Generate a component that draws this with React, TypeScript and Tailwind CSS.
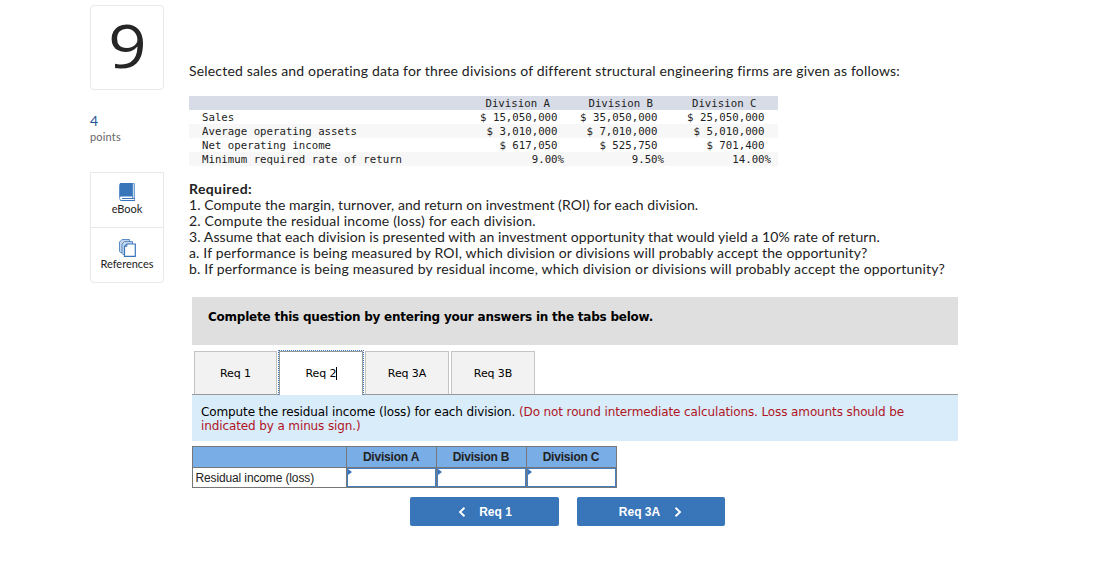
const rows = [
  { label: "Sales", values: ["$ 15,050,000", "$ 35,050,000", "$ 25,050,000"], pad: "pr-[6.5px]" },
  { label: "Average operating assets", values: ["$ 3,010,000", "$ 7,010,000", "$ 5,010,000"], pad: "pr-[6.5px]" },
  { label: "Net operating income", values: ["$ 617,050", "$ 525,750", "$ 701,400"], pad: "pr-[6.5px]" },
  { label: "Minimum required rate of return", values: ["9.00%", "9.50%", "14.00%"], pad: "" },
];

const divisions = ["Division A", "Division B", "Division C"];

function BookIcon() {
  return (
    <svg width="17" height="19" viewBox="0 0 17 19" className="block">
      <path d="M2.5 0.5H15.5V17.5H2.5C1.3 17.5 0.5 16.6 0.5 15.5V2.5C0.5 1.3 1.3 0.5 2.5 0.5Z" fill="#fff" stroke="#7ba3d3" />
      <path d="M2 0H13.5V13.5H2.5C1.6 13.5 1 13.9 0.6 14.4V1.4C0.6 0.6 1.2 0 2 0Z" fill="#3875b9" />
      <path d="M3 15.5H15.5M13.8 1V15" stroke="#3875b9" fill="none" />
      <path d="M1 16.6C1.5 17.3 2 17.5 2.6 17.5H16" stroke="#3875b9" fill="none" />
    </svg>
  );
}

function PagesIcon() {
  return (
    <svg width="17" height="18" viewBox="0 0 17 18" className="block">
      <path d="M3 0.5H10.5V13.5H1.5L0.5 12.5V3Z" fill="#c3d5ea" stroke="#5b8cc8" />
      <path d="M5.5 2.5H13.5V15.5H4L3 14.5V5Z" fill="#c3d5ea" stroke="#5b8cc8" />
      <path d="M8 5H16.3V17.4H5.5V7.5Z" fill="#fff" stroke="#3875b9" strokeWidth="1.2" />
      <path d="M5.5 7.5H8V5Z" fill="#7ba3d3" stroke="#3875b9" strokeWidth="0.6" />
    </svg>
  );
}

function Chevron({ d }: { d: string }) {
  return (
    <svg width="8" height="10" viewBox="0 0 8 10" className="block">
      <path d={d} fill="none" stroke="#fff" strokeWidth="1.9" />
    </svg>
  );
}

function Sidebar() {
  return (
    <aside className="flex w-[74px] shrink-0 flex-col pt-[5px] font-['Lato',sans-serif]">
      <div className="flex h-[85px] items-center justify-center rounded-[4px] border border-[#e8e8e8] pb-[6px] font-['Open_Sans',sans-serif] text-[61px] leading-none text-[#262626]">
        <span className="scale-x-110">9</span>
      </div>
      <div className="mt-[23px] h-[16px] text-[14px] leading-[16px] text-[#1f5596]">4</div>
      <div className="h-[16px] text-[11px] leading-[16px] tracking-[0.19px] text-[#666]">points</div>
      <div className="mt-[27px] flex h-[111px] flex-col rounded-b-[4px] border border-[#e8e8e8] text-[11px] text-[#222]">
        <div className="flex h-[55px] flex-col items-center border-b border-[#e8e8e8] pt-[10px]">
          <BookIcon />
          <span className="leading-[14px]">eBook</span>
        </div>
        <div className="flex flex-col items-center pt-[11px]">
          <PagesIcon />
          <span className="leading-[14px]">References</span>
        </div>
      </div>
    </aside>
  );
}

function DataTable() {
  return (
    <div className="mt-[17px] w-[589px] whitespace-pre font-['DejaVu_Sans_Mono',monospace] text-[10.73px] leading-[16px] text-[#222]">
      <div className="grid h-[14px] grid-cols-[375px_100px_107px] bg-[#d8dce7] text-right">
        <span className="col-start-1 pr-[14px]">Division A</span>
        <span className="pr-[11px]">Division B</span>
        <span className="pr-[14.5px]">Division C</span>
      </div>
      {rows.map((r, i) => (
        <div key={r.label} className={`flex h-[14px] ${i % 2 ? "bg-[#f7f7f7]" : "bg-white"}`}>
          <span className="w-[275px] pl-[13px]">{r.label}</span>
          <div className="grid grid-cols-[100px_100px_107px] text-right">
            {r.values.map((v) => (
              <span key={v} className={r.pad}>{v}</span>
            ))}
          </div>
        </div>
      ))}
    </div>
  );
}

function Tab({ label, width }: { label: string; width: string }) {
  return (
    <div className={`flex h-[43px] items-center justify-center border border-b-0 border-[#c4c4c4] bg-[#f2f2f2] pt-px leading-[13px] ${width}`}>
      {label}
    </div>
  );
}

function ActiveTab({ label }: { label: string }) {
  return (
    <div className="relative z-10 mx-px mb-[-1px] w-[86px] border border-b-0 border-dotted border-[#3875b9]">
      <div className="flex h-[44px] items-center justify-center border border-b-0 border-[#999] bg-white">
        <span className="ml-px border-r border-black leading-[13px]">{label}</span>
      </div>
    </div>
  );
}

function AnswerTable() {
  return (
    <div className="mt-[5px] grid w-[425px] grid-cols-[153px_89px_89px_89px] grid-rows-[20px_19px] gap-px bg-[#777] p-px font-['Liberation_Sans',sans-serif] text-[12px] text-[#222]">
      <div className="bg-[#79ade6]" />
      {divisions.map((d) => (
        <div key={d} className="bg-[#79ade6] pr-px text-center font-bold leading-[20px] tracking-[-0.2px]">{d}</div>
      ))}
      <div className="bg-white pl-[2.5px] leading-[20px] tracking-[-0.13px]">Residual income (loss)</div>
      {divisions.map((d) => (
        <div key={d} className="border border-[#4680c2] bg-white">
          <svg width="4" height="6" viewBox="0 0 4 6" className="block">
            <path d="M0 0L4 3L0 6Z" fill="#3875b9" />
          </svg>
        </div>
      ))}
    </div>
  );
}

export default function App() {
  return (
    <div className="flex h-[567px] w-[1117px] overflow-hidden whitespace-nowrap bg-white pl-[90px]">
      <Sidebar />
      <main className="ml-[25px] w-[769px] pt-[63px]">
        <div className="font-['Lato',sans-serif] text-[14px] leading-[16px] text-[#222]">
          <p className="tracking-[0.178px]">
            Selected sales and operating data for three divisions of different structural engineering firms are given as follows:
          </p>
          <DataTable />
          <p className="mt-[15px] font-bold tracking-[0.39px]">Required:</p>
          <p className="tracking-[0.06px]">1. Compute the margin, turnover, and return on investment (ROI) for each division.</p>
          <p className="tracking-[0.188px]">2. Compute the residual income (loss) for each division.</p>
          <p className="tracking-[0.09px]">
            3. Assume that each division is presented with an investment opportunity that would yield a 10% rate of return.
          </p>
          <p className="tracking-[0.156px]">
            a. If performance is being measured by ROI, which division or divisions will probably accept the opportunity?
          </p>
          <p className="tracking-[0.18px]">
            b. If performance is being measured by residual income, which division or divisions will probably accept the opportunity?
          </p>
        </div>

        <section className="ml-[3px] mt-[20px] w-[766px] font-['DejaVu_Sans',sans-serif] text-[12px] text-black">
          <div className="h-[48px] bg-[#dfdfdf] pl-[16px] pt-[12px] font-bold leading-[16px] tracking-[-0.227px]">
            Complete this question by entering your answers in the tabs below.
          </div>
          <div className="flex h-[50px] items-end border-b border-[#999] pl-[2px] text-[11px] tracking-[-0.1px]">
            <Tab label="Req 1" width="w-[83px]" />
            <ActiveTab label="Req 2" />
            <Tab label="Req 3A" width="w-[84px]" />
            <div className="ml-[2px]">
              <Tab label="Req 3B" width="w-[84px]" />
            </div>
          </div>
          <div className="h-[46px] bg-[#d9ecfa] pl-[9px] pt-[10px] leading-[14px] tracking-[-0.115px]">
            <p>
              Compute the residual income (loss) for each division.{" "}
              <span className="text-[#b0151f]">(Do not round intermediate calculations. Loss amounts should be</span>
            </p>
            <p className="text-[#b0151f]">indicated by a minus sign.)</p>
          </div>
          <AnswerTable />
          <div className="ml-[218px] mt-[9px] flex gap-[18px] font-['Liberation_Sans',sans-serif] font-bold text-white">
            <button className="flex h-[29px] w-[149px] items-center justify-center gap-[13px] rounded-[2px] bg-[#3875b9] pl-px">
              <Chevron d="M6.5 0.8L2 5L6.5 9.2" />
              <span>Req 1</span>
            </button>
            <button className="flex h-[29px] w-[148px] items-center justify-center gap-[14px] rounded-[2px] bg-[#3875b9] pr-px">
              <span>Req 3A</span>
              <Chevron d="M1.5 0.8L6 5L1.5 9.2" />
            </button>
          </div>
        </section>
      </main>
    </div>
  );
}
